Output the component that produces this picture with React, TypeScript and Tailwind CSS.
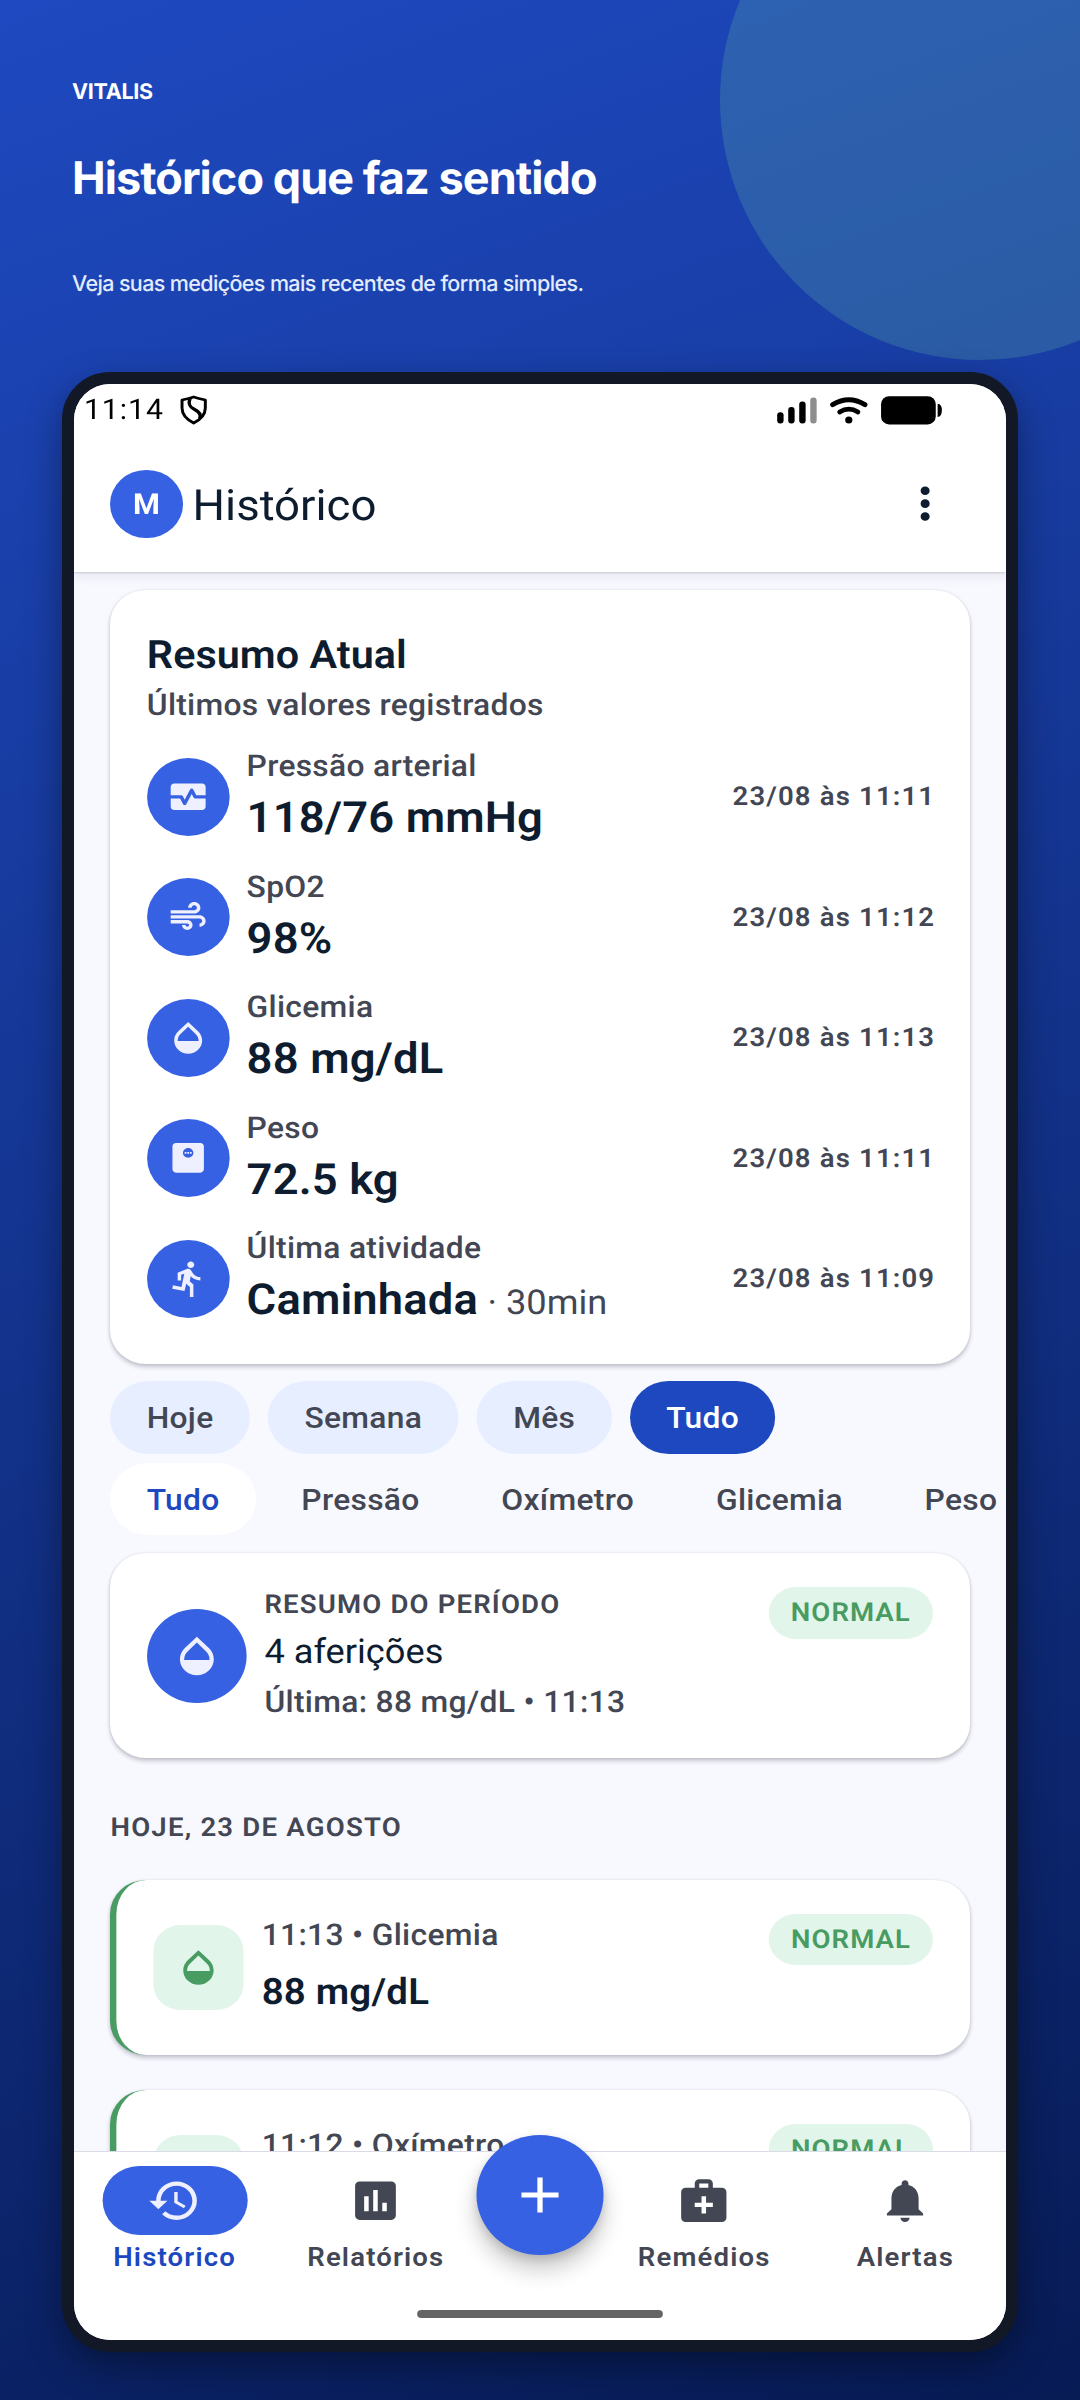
import React, { useState } from "react";
import type { IconType } from "react-icons";
import {
  MdAdd,
  MdAir,
  MdAssessment,
  MdDirectionsRun,
  MdHistory,
  MdMedicalServices,
  MdMonitorHeart,
  MdMonitorWeight,
  MdMoreVert,
  MdNotifications,
  MdOpacity,
} from "react-icons/md";

type Measurement = {
  label: string;
  value: string;
  detail?: string;
  date: string;
  icon: IconType;
};

type Entry = {
  time: string;
  kind: string;
  value: string;
  status: string;
  icon: IconType;
};

const measurements: Measurement[] = [
  { label: "Pressão arterial", value: "118/76 mmHg", date: "23/08 às 11:11", icon: MdMonitorHeart },
  { label: "SpO2", value: "98%", date: "23/08 às 11:12", icon: MdAir },
  { label: "Glicemia", value: "88 mg/dL", date: "23/08 às 11:13", icon: MdOpacity },
  { label: "Peso", value: "72.5 kg", date: "23/08 às 11:11", icon: MdMonitorWeight },
  { label: "Última atividade", value: "Caminhada", detail: "30min", date: "23/08 às 11:09", icon: MdDirectionsRun },
];

const periods = ["Hoje", "Semana", "Mês", "Tudo"];
const kinds = ["Tudo", "Pressão", "Oxímetro", "Glicemia", "Peso"];

const entries: Entry[] = [
  { time: "11:13", kind: "Glicemia", value: "88 mg/dL", status: "NORMAL", icon: MdOpacity },
  { time: "11:12", kind: "Oxímetro", value: "98%", status: "NORMAL", icon: MdAir },
];

const CARD_SHADOW = "shadow-[0_3px_4px_rgba(20,20,40,0.22),0_0_3px_rgba(20,20,40,0.1)]";

const StatusBar = () => (
  <div className="flex h-[52px] items-center text-black">
    <span className="w-[100px] pl-[9.4px] text-[28.5px] leading-none tracking-[0.9px]">11:14</span>
    <svg
      className="h-[30px] w-[26px]"
      viewBox="0 0 26 30"
      preserveAspectRatio="none"
      fill="none"
      stroke="currentColor"
      strokeWidth="2.8"
      strokeLinejoin="round"
    >
      <path d="M13 2 C9.5 3.2 5.5 4.2 2 5 V13 C2 20 6.5 24.5 13 28 C19.5 24.5 24 20 24 13 V5 C20.5 4.2 16.5 3.2 13 2 Z" />
      <path d="M9.6 3.4 C7.5 9 9 12 13.5 14.2 C18.5 16.7 20.5 19.5 18.6 23.6" strokeWidth="3.2" />
    </svg>
    <svg
      className="ml-auto mr-[60.5px] h-[31px] w-[157px]"
      viewBox="0 0 166 31"
      preserveAspectRatio="none"
      fill="currentColor"
    >
      <rect x="1" y="17.2" width="6.4" height="11.2" rx="3" />
      <rect x="12" y="12" width="6.4" height="16.4" rx="3" />
      <rect x="23" y="6.4" width="6.4" height="22" rx="3" />
      <rect x="34" y="2.4" width="6.4" height="26" rx="3" fill="#8e8e8e" />
      <g fill="none" stroke="currentColor" strokeLinecap="round">
        <path d="M56.4 9.6 Q72.5 -0.2 88.6 9.6" strokeWidth="5" />
        <path d="M63.4 17 Q72.5 11.2 81.6 17" strokeWidth="4.8" />
      </g>
      <circle cx="72.5" cy="25" r="3.6" />
      <rect x="104.7" y="1.2" width="54.6" height="28.2" rx="8" />
      <path d="M161.2 8.8 Q165.4 9.2 165.4 15.4 Q165.4 21.6 161.2 22 Z" />
    </svg>
  </div>
);

const Badge = ({ text }: { text: string }) => (
  <span className="flex h-[51.3px] shrink-0 items-center self-start rounded-full bg-[#e2f5ea] px-[21.2px] pt-[2px] text-[26px] font-semibold tracking-[1px] text-[#489b61]">
    {text}
  </span>
);

const NavItem = ({ icon: Icon, label, active }: { icon: IconType; label: string; active?: boolean }) => (
  <button
    className={`flex flex-1 flex-col items-center gap-[5px] ${
      active ? "text-[#1c48bf]" : "text-[#434653]"
    }`}
  >
    <span
      className={`flex h-[68.5px] w-[137px] items-center justify-center rounded-full ${
        active ? "bg-[#3761e3] text-[#eeefff]" : ""
      }`}
    >
      <Icon className="size-[51.3px]" />
    </span>
    <span className="text-[26px] font-[560] leading-[34.2px] tracking-[1.1px]">{label}</span>
  </button>
);

const App = () => {
  const [period, setPeriod] = useState("Tudo");
  const [kind, setKind] = useState("Tudo");

  return (
    <div className="relative flex h-[2400px] w-[1080px] flex-col overflow-hidden bg-[linear-gradient(160deg,#1e49c0,#071b55)] [text-rendering:geometricPrecision]">
      <div className="absolute -top-[160px] left-[720px] size-[520px] rounded-full bg-[rgba(110,200,165,0.22)]" />

      <header className="relative h-[372px] pl-[72px] pt-[75.5px] font-['Inter',sans-serif] text-white">
        <p className="text-[21.5px] font-bold leading-[32px] tracking-[-0.3px]">VITALIS</p>
        <h1 className="mt-[42px] text-[45px] font-bold leading-[56px] tracking-[-0.95px]">
          Histórico que faz sentido
        </h1>
        <p className="mt-[62px] text-[21.5px] font-medium leading-[32px] tracking-[-0.63px] text-[#e3ebff]">
          Veja suas medições mais recentes de forma simples.
        </p>
      </header>

      {/* Phone */}
      <div className="relative ml-[62px] h-[1980px] w-[956px] rounded-[48px] border-12 border-[#121826] bg-[#121826] shadow-[0_14px_36px_rgba(0,0,0,0.38)]">
        <div className="h-[1956px] w-[932px] overflow-hidden rounded-[36px] bg-white">
          <div className="flex h-full w-[880px] origin-top-left scale-x-[1.0591] flex-col font-['Roboto',sans-serif] text-[#0d1c2e]">
            <div className="relative z-10 bg-white shadow-[0_1px_2px_rgba(20,20,50,0.18),0_4px_12px_rgba(20,20,50,0.08)]">
              <StatusBar />
              <div className="flex h-[136px] items-center pl-[34.2px] pr-[50.5px]">
                <span className="flex size-[68.6px] items-center justify-center rounded-full bg-[#3761e3] pt-[3px] text-[29px] font-bold text-white">
                  M
                </span>
                <h2 className="ml-[9.2px] pt-[3px] text-[43px] leading-[60px]">Histórico</h2>
                <MdMoreVert className="ml-auto size-[51.3px]" />
              </div>
            </div>

            <main className="flex min-h-0 flex-1 flex-col overflow-hidden bg-[#f8f9ff] px-[34.4px] pt-[17.5px]">
              <section className={`h-[774.6px] shrink-0 rounded-[34px] bg-white p-[34.4px] ${CARD_SHADOW}`}>
                <h3 className="pt-[1px] text-[39px] font-semibold leading-[60.6px] tracking-[0.05px]">Resumo Atual</h3>
                <p className="text-[30px] font-[540] leading-[42.8px] tracking-[0.25px] text-[#434653]">
                  Últimos valores registrados
                </p>
                <div className="mt-[17px] flex flex-col gap-[17.7px]">
                  {measurements.map(({ label, value, detail, date, icon: Icon }) => (
                    <div key={label} className="flex h-[102.8px] items-center">
                      <span className="flex size-[78px] items-center justify-center rounded-full bg-[#3761e3] text-[#eeefff]">
                        <Icon className="size-[39.6px]" />
                      </span>
                      <div className="ml-[16.2px] flex-1 pt-[2px]">
                        <div className="text-[30px] font-[540] leading-[42.8px] tracking-[0.28px] text-[#434653]">
                          {label}
                        </div>
                        <div className="h-[60px] text-[42.8px] font-semibold leading-[59.6px] tracking-[0.15px]">
                          {value}
                          {detail && (
                            <span className="ml-[9px] text-[34.2px] font-normal tracking-normal text-[#434653]">
                              · {detail}
                            </span>
                          )}
                        </div>
                      </div>
                      <span className="-mr-[2px] pt-[2.4px] text-[26px] font-[560] tracking-[1.1px] text-[#434653]">
                        {date}
                      </span>
                    </div>
                  ))}
                </div>
              </section>

              <div className="mt-[16.6px] flex shrink-0 gap-[17.5px]">
                {periods.map((item) => (
                  <button
                    key={item}
                    onClick={() => setPeriod(item)}
                    className={`h-[73.6px] rounded-full px-[34.2px] text-[30px] font-[550] tracking-[0.3px] ${
                      period === item ? "bg-[#1d48bf] text-white" : "bg-[#e6eeff] text-[#434653]"
                    }`}
                  >
                    {item}
                  </button>
                ))}
              </div>

              <div className="-mr-[34.4px] mt-[8.6px] flex shrink-0 gap-[8.8px] overflow-hidden">
                {kinds.map((item) => (
                  <button
                    key={item}
                    onClick={() => setKind(item)}
                    className={`h-[72.6px] shrink-0 rounded-full px-[34.2px] text-[30px] font-[550] tracking-[0.3px] ${
                      kind === item ? "bg-white text-[#1d48bf]" : "text-[#434653]"
                    }`}
                  >
                    {item}
                  </button>
                ))}
              </div>

              <section
                className={`mt-[17.4px] flex h-[205.6px] shrink-0 items-center rounded-[34px] bg-white p-[34.4px] ${CARD_SHADOW}`}
              >
                <span className="flex size-[94.2px] items-center justify-center rounded-full bg-[#3761e3] text-[#eeefff]">
                  <MdOpacity className="size-[48px]" />
                </span>
                <div className="ml-[16.8px] flex flex-1 flex-col gap-[4.2px] pt-[2px] text-[#434653]">
                  <div className="text-[26px] font-[560] leading-[34.2px] tracking-[1.1px]">RESUMO DO PERÍODO</div>
                  <div className="text-[34.2px] leading-[51.3px] text-[#0d1c2e]">4 aferições</div>
                  <div className="text-[30px] font-[540] leading-[42.8px] tracking-[0.3px]">
                    Última: 88 mg/dL • 11:13
                  </div>
                </div>
                <Badge text="NORMAL" />
              </section>

              <h4 className="mt-[53px] shrink-0 text-[26px] font-[640] leading-[34.2px] tracking-[1.15px] text-[#434653]">
                HOJE, 23 DE AGOSTO
              </h4>

              {entries.map(({ time, kind: name, value, status, icon: Icon }) => (
                <section
                  key={time}
                  className={`mt-[34.2px] flex h-[175.6px] shrink-0 items-center rounded-[34px] border-l-[6.6px] border-[#489b61] bg-white p-[34.2px] ${CARD_SHADOW}`}
                >
                  <span className="flex size-[85.6px] items-center justify-center rounded-[25.7px] bg-[#e2f5ea] text-[#489b61]">
                    <Icon className="size-[43px]" />
                  </span>
                  <div className="ml-[17px] flex flex-1 flex-col gap-[6px]">
                    <div className="text-[30px] font-[540] leading-[42.8px] tracking-[0.3px] text-[#434653]">
                      {time} • {name}
                    </div>
                    <div className="text-[36.3px] font-semibold leading-[56px] tracking-[0.2px]">{value}</div>
                  </div>
                  <Badge text={status} />
                </section>
              ))}
            </main>

            <nav className="relative z-10 h-[189px] shrink-0 border-t border-[#dadbe6] bg-white pt-[14px]">
              <div className="flex">
                <NavItem icon={MdHistory} label="Histórico" active />
                <NavItem icon={MdAssessment} label="Relatórios" />
                <button className="-mt-[31px] flex size-[120px] items-center justify-center rounded-full bg-[#3761e3] text-white shadow-[0_14px_22px_rgba(0,0,0,0.22),0_4px_8px_rgba(0,0,0,0.12)]">
                  <MdAdd className="size-[60px]" />
                </button>
                <NavItem icon={MdMedicalServices} label="Remédios" />
                <NavItem icon={MdNotifications} label="Alertas" />
              </div>
              <div className="mx-auto mt-[36px] h-[8.6px] w-[231.6px] rounded-full bg-[#656565]" />
            </nav>
          </div>
        </div>
      </div>
    </div>
  );
};

export default App;
